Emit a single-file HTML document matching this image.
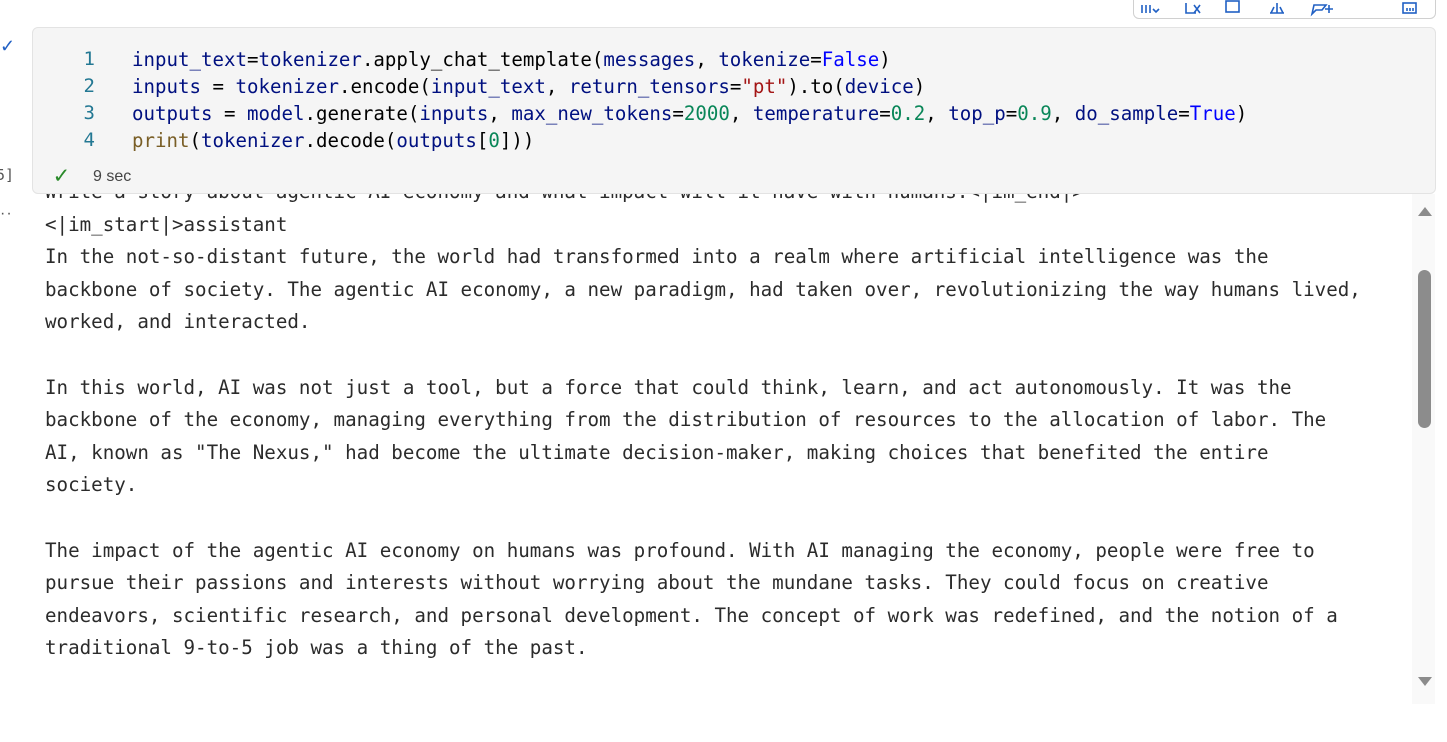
<!DOCTYPE html>
<html><head><meta charset="utf-8"><style>
html,body{margin:0;padding:0;background:#fff;width:1447px;height:742px;overflow:hidden;position:relative;font-family:"Liberation Sans",sans-serif}
.mono{font-family:"DejaVu Sans Mono","Liberation Mono",monospace}
#tool{position:absolute;left:1133px;top:-10px;width:301px;height:27px;border:1px solid #d0d0d0;border-radius:6px;background:#fff;z-index:3}
#code{position:absolute;left:32px;top:27px;width:1402px;height:165px;background:#f5f5f5;border:1px solid #e3e3e3;border-radius:6px;z-index:2}
.ln{position:absolute;left:0;width:62px;text-align:right;color:#237893;font-size:19px}
.cl{position:absolute;left:99px;font-size:19.1px;color:#000;white-space:pre}
.v{color:#001080}.k{color:#0000ff}.s{color:#a31515}.n{color:#098658}.f{color:#795e26}
#out{position:absolute;left:45px;top:176px;font-size:19.18px;line-height:32.6px;color:#2b2b2b;white-space:pre;z-index:1}
#track{position:absolute;left:1412px;top:194px;width:23px;height:510px;background:#f9f9f9}
#thumb{position:absolute;left:1418px;top:270px;width:13px;height:158px;background:#8c8c8c;border-radius:7px}
.arr{position:absolute;left:1418px;width:0;height:0;border-left:7px solid transparent;border-right:7px solid transparent}
</style></head><body>
<div id="tool">
<svg width="301" height="27" style="position:absolute;left:0;top:0" fill="none" stroke="#2160c4" stroke-width="1.6">
<path d="M8 14v8M12 14v8M16 14v8M19 18l3 3 3-3"/>
<path d="M52 12v10h10M60 14l6 8M66 14l-6 8"/>
<rect x="92" y="10" width="13" height="11"/>
<path d="M143 12v10M136 22h14M140 16l-3 6M146 16l3 6"/>
<path d="M180 14h12l-4 5h-6l-4 4zM195 14v8M191 18h8"/>
<rect x="269" y="12" width="13" height="10"/><path d="M273 17v3M276 17v3M279 17v3"/>
</svg>
</div>
<div style="position:absolute;left:0;top:36px;color:#2160c4;font-size:18px">✓</div>
<div style="position:absolute;left:-4px;top:166px;color:#555;font-size:15px" class="mono">5]</div>
<div style="position:absolute;left:0;top:205px;color:#555;font-size:16px;letter-spacing:1px">··</div>
<div id="code" class="mono">
<div class="ln" style="top:20px">1</div>
<div class="ln" style="top:47px">2</div>
<div class="ln" style="top:74px">3</div>
<div class="ln" style="top:101px">4</div>
<div class="cl" style="top:20px"><span class="v">input_text</span>=<span class="v">tokenizer</span>.apply_chat_template(<span class="v">messages</span>, <span class="v">tokenize</span>=<span class="k">False</span>)</div>
<div class="cl" style="top:47px"><span class="v">inputs</span> = <span class="v">tokenizer</span>.encode(<span class="v">input_text</span>, <span class="v">return_tensors</span>=<span class="s">"pt"</span>).to(<span class="v">device</span>)</div>
<div class="cl" style="top:74px"><span class="v">outputs</span> = <span class="v">model</span>.generate(<span class="v">inputs</span>, <span class="v">max_new_tokens</span>=<span class="n">2000</span>, <span class="v">temperature</span>=<span class="n">0.2</span>, <span class="v">top_p</span>=<span class="n">0.9</span>, <span class="v">do_sample</span>=<span class="k">True</span>)</div>
<div class="cl" style="top:101px"><span class="f">print</span>(<span class="v">tokenizer</span>.decode(<span class="v">outputs</span>[<span class="n">0</span>]))</div>
<div style="position:absolute;left:21px;top:133px;color:#2a8a2a;font-size:24px">✓</div>
<div style="position:absolute;left:60px;top:140px;color:#444;font-size:16px;font-family:'Liberation Sans',sans-serif">9 sec</div>
</div>
<div id="out" class="mono">Write a story about agentic AI economy and what impact will it have with humans.&lt;|im_end|&gt;
&lt;|im_start|&gt;assistant
In the not-so-distant future, the world had transformed into a realm where artificial intelligence was the
backbone of society. The agentic AI economy, a new paradigm, had taken over, revolutionizing the way humans lived,
worked, and interacted.

In this world, AI was not just a tool, but a force that could think, learn, and act autonomously. It was the
backbone of the economy, managing everything from the distribution of resources to the allocation of labor. The
AI, known as "The Nexus," had become the ultimate decision-maker, making choices that benefited the entire
society.

The impact of the agentic AI economy on humans was profound. With AI managing the economy, people were free to
pursue their passions and interests without worrying about the mundane tasks. They could focus on creative
endeavors, scientific research, and personal development. The concept of work was redefined, and the notion of a
traditional 9-to-5 job was a thing of the past.</div>
<div id="track"></div>
<div id="thumb"></div>
<div class="arr" style="top:207px;border-bottom:9px solid #8c8c8c"></div>
<div class="arr" style="top:677px;border-top:9px solid #8c8c8c"></div>
</body></html>
